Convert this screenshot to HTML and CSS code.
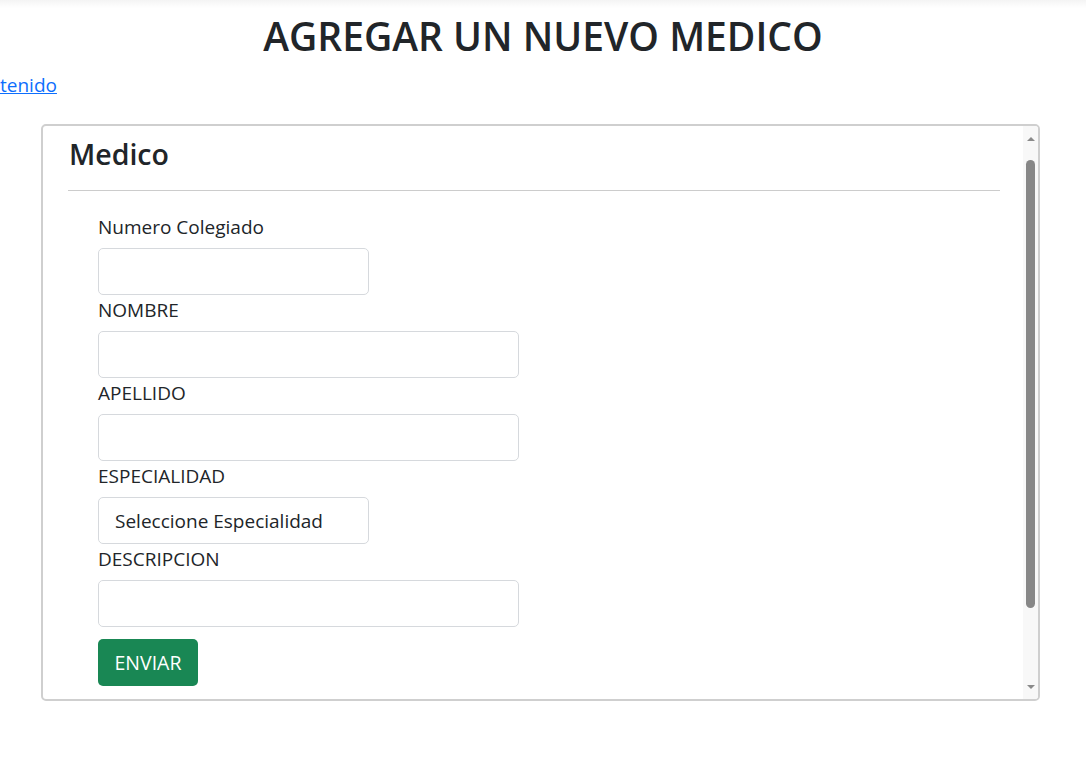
FILE: index.html
```html
<!DOCTYPE html>
<html lang="es">
<head>
<meta charset="utf-8">
<title>Agregar un nuevo medico</title>
<link rel="stylesheet" href="styles.css">
</head>
<body>
<div class="topshade"></div>
<h1 class="title">AGREGAR UN NUEVO MEDICO</h1>
<a class="back-link" href="#">tenido</a>
<div class="card">
  <div class="card-content">
    <h3 class="card-title">Medico</h3>
    <hr class="divider">
    <form class="form">
      <label class="form-label">Numero Colegiado</label>
      <input class="form-control short" type="text">
      <label class="form-label">NOMBRE</label>
      <input class="form-control wide" type="text">
      <label class="form-label">APELLIDO</label>
      <input class="form-control wide" type="text">
      <label class="form-label">ESPECIALIDAD</label>
      <div class="form-select short">Seleccione Especialidad</div>
      <label class="form-label">DESCRIPCION</label>
      <input class="form-control wide" type="text">
      <button class="btn-submit" type="button">ENVIAR</button>
    </form>
  </div>
  <div class="scrollbar">
    <span class="arrow-up"></span>
    <div class="track"><div class="thumb"></div></div>
    <span class="arrow-down"></span>
  </div>
</div>
</body>
</html>
```
FILE: styles.css
```css
* { box-sizing: border-box; }
html, body { margin: 0; padding: 0; background: #fff; }
body {
  font-family: "Open Sans", "Noto Sans", sans-serif;
  color: #212529;
}
.topshade {
  height: 8px;
  background: linear-gradient(#f4f4f4, #ffffff);
  margin-bottom: -8px;
}
.title {
  margin: 0;
  padding-top: 12px;
  font-size: 39px;
  font-weight: 600;
  line-height: 48px;
  text-align: center;
}
.back-link {
  display: block;
  margin-top: 11px;
  font-size: 19px;
  line-height: 28px;
  color: #0d6efd;
  text-decoration: underline;
}
.card {
  margin: 25px 46px 0 41px;
  height: 577px;
  border: 2px solid #cfcfcf;
  border-radius: 5px;
  display: flex;
  overflow: hidden;
}
.card-content {
  flex: 1;
  overflow: hidden;
  padding: 10px 23px 0 25px;
}
.card-title {
  margin: 0;
  font-size: 28.5px;
  font-weight: 600;
  line-height: 36px;
  padding-left: 1px;
}
.divider {
  margin: 18px 0 0 0;
  border: 0;
  border-top: 1px solid #cccccc;
}
.form {
  display: flex;
  flex-direction: column;
  align-items: flex-start;
  padding: 22px 0 0 30px;
}
.form-label {
  font-size: 19px;
  line-height: 28px;
  margin-bottom: 7px;
}
.form-control, .form-select {
  height: 47px;
  border: 1px solid #d6d9dd;
  border-radius: 5px;
  background: #fff;
  margin: 0 0 1px 0;
  font-family: inherit;
}
.short { width: 271px; }
.wide { width: 421px; }
.form-select {
  display: flex;
  align-items: center;
  padding-left: 16px;
  font-size: 19px;
  color: #212529;
}
.btn-submit {
  margin-top: 11px;
  width: 100px;
  height: 47px;
  border: 0;
  border-radius: 5px;
  background: #198754;
  color: #fff;
  font-family: inherit;
  font-size: 19.5px;
  padding: 0;
}
.scrollbar {
  width: 15px;
  background: #f8f8f8;
  display: flex;
  flex-direction: column;
  align-items: center;
  padding: 11px 0 10px 0;
}
.arrow-up, .arrow-down {
  width: 0;
  height: 0;
  border-left: 4px solid transparent;
  border-right: 4px solid transparent;
}
.arrow-up { border-bottom: 4px solid #8a8a8a; }
.arrow-down { border-top: 4px solid #8a8a8a; }
.track {
  flex: 1;
  width: 100%;
  display: flex;
  justify-content: center;
  padding-top: 19px;
}
.thumb {
  width: 9px;
  height: 448px;
  background: #878787;
  border-radius: 5px;
}
```
